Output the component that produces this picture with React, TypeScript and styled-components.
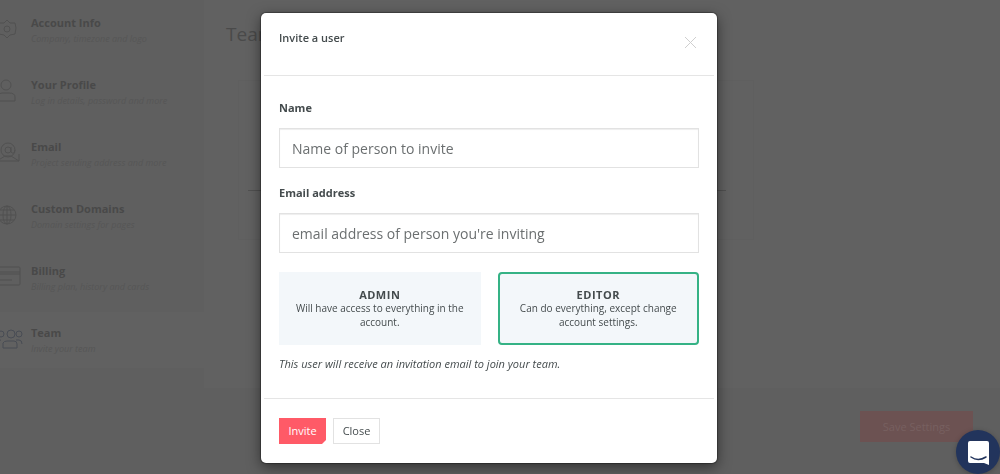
import React from "react";
import styled, { createGlobalStyle } from "styled-components";

const GlobalStyle = createGlobalStyle`
  *, *::before, *::after { box-sizing: border-box; }
  body {
    margin: 0;
    background: #5f5f5f;
    color: #444b4d;
    font-family: "Open Sans", "Noto Sans", sans-serif;
    font-size: 11px;
    line-height: 16px;
  }
  button, input { font: inherit; color: inherit; margin: 0; }
`;

const Page = styled.div`
  display: flex;
  min-height: 100vh;
  overflow: hidden;
`;

const Sidebar = styled.nav`
  flex: 0 0 204px;
  display: flex;
  flex-direction: column;
  gap: 6px;
  padding-top: 2px;
`;

const NavItem = styled.a<{ $active?: boolean }>`
  display: flex;
  align-items: flex-start;
  gap: 7px;
  height: 56px;
  padding-top: 13px;
  color: #494949;
  text-decoration: none;
  background: ${(p) => (p.$active ? "#616161" : "transparent")};
`;

const NavIcon = styled.svg<{ $active?: boolean }>`
  flex: none;
  width: 24px;
  height: 28px;
  fill: none;
  stroke: ${(p) => (p.$active ? "#484c54" : "#515151")};
  stroke-width: 1;
`;

const NavText = styled.span`
  display: flex;
  flex-direction: column;
`;

const NavTitle = styled.strong`
  font-weight: 700;
`;

const NavHint = styled.em`
  font-size: 9px;
  color: #565656;
`;

const Content = styled.div`
  flex: 1;
  display: flex;
  flex-direction: column;
`;

const Panel = styled.main`
  background: #616161;
  padding: 20px 22px 148px;
`;

const PanelTitle = styled.h1`
  margin: 0;
  font-size: 19px;
  line-height: 28px;
  font-weight: 400;
  color: #4a4a4a;
`;

const Card = styled.section`
  max-width: 516px;
  height: 160px;
  margin: 32px 0 0 12px;
  padding: 109px 27px 0 9px;
  border: 1px solid #5f5f5f;
`;

const CardRule = styled.hr`
  margin: 0;
  border: 0;
  border-top: 1px solid #505050;
`;

const PageActions = styled.div`
  display: flex;
  justify-content: flex-end;
  padding: 23px 27px 32px;
`;

const SaveButton = styled.button`
  width: 113px;
  height: 31px;
  padding: 0;
  border: 0;
  background: #6c5252;
  color: #776060;
`;

const Backdrop = styled.div`
  position: fixed;
  inset: 0;
  overflow: auto;
  padding: 13px 22px 11px 0;
`;

const Dialog = styled.div`
  max-width: 456px;
  margin: 0 auto;
  padding: 0 3px;
  background: #fff;
  border-radius: 5px;
  box-shadow: 0 0 1px 1px rgba(0, 0, 0, 0.3), 0 4px 14px rgba(0, 0, 0, 0.5);
`;

const DialogHeader = styled.header`
  display: flex;
  justify-content: space-between;
  height: 63px;
  padding: 17px 15px 0;
  border-bottom: 1px solid #e5e5e5;
`;

const DialogTitle = styled.h2`
  margin: 0;
  font-size: 11px;
  line-height: 16px;
  font-weight: 600;
`;

const DismissButton = styled.button`
  width: 18px;
  height: 24px;
  padding: 0;
  border: 0;
  background: none;
  color: #cfcfcf;
`;

const DialogBody = styled.div`
  padding: 24px 15px 26px;
`;

const Field = styled.div`
  display: flex;
  flex-direction: column;
  gap: 12px;
  margin-bottom: 17px;
`;

const FieldLabel = styled.label`
  font-weight: 700;
`;

const TextInput = styled.input`
  width: 100%;
  height: 40px;
  padding: 0 12px;
  border: 1px solid #e2e2e2;
  border-radius: 0;
  background: #fff;
  box-shadow: inset 0 1px 1px rgba(0, 0, 0, 0.07);
  font-size: 14px;
  &::placeholder { color: #6b6f70; opacity: 1; }
`;

const Roles = styled.div`
  display: grid;
  grid-template-columns: 1fr 1fr;
  gap: 17px;
  margin: 19px 0 11px;
`;

const RoleInput = styled.input`
  appearance: none;
  position: absolute;
  width: 1px;
  height: 1px;
  opacity: 0;
`;

const RoleCard = styled.label`
  display: flex;
  flex-direction: column;
  align-items: center;
  padding: 14px 12px;
  border: 2px solid transparent;
  background: #f3f7fa;
  background-clip: border-box;
  text-align: center;
  cursor: pointer;
  &:has(input:checked) {
    border-color: #35b285;
    border-radius: 4px;
  }
`;

const RoleName = styled.strong`
  line-height: 13px;
  letter-spacing: 0.5px;
`;

const RoleText = styled.span`
  font-size: 10px;
  line-height: 14px;
`;

const Note = styled.p`
  margin: 0;
  font-style: italic;
`;

const DialogFooter = styled.footer`
  display: flex;
  gap: 7px;
  padding: 19px 15px;
  border-top: 1px solid #e5e5e5;
`;

const ActionButton = styled.button<{ $primary?: boolean }>`
  width: 47px;
  height: 26px;
  padding: 0;
  border: 1px solid ${(p) => (p.$primary ? "#ff5a67" : "#e2e2e2")};
  background: ${(p) => (p.$primary ? "#ff5a67" : "#fff")};
  color: ${(p) => (p.$primary ? "#fff" : "inherit")};
  clip-path: ${(p) =>
    p.$primary
      ? "polygon(0 0, 100% 0, 100% calc(100% - 4px), calc(100% - 4px) 100%, 0 100%)"
      : "none"};
`;

const ChatButton = styled.button`
  position: fixed;
  right: 0;
  bottom: 0;
  width: 44px;
  height: 44px;
  padding: 0;
  border: 0;
  border-radius: 50%;
  background: #22345c;
  box-shadow: 0 1px 5px rgba(0, 0, 0, 0.25);
`;

const items = [
  {
    title: "Account Info",
    hint: "Company, timezone and logo",
    icon: (
      <>
        <path d="M7 5l3 3 5 0 1 5 -1 6 -5 1 -3 3 -3-3 -5-1 -1-6 1-5 5 0z" />
        <circle cx="7" cy="14" r="3" />
      </>
    ),
  },
  {
    title: "Your Profile",
    hint: "Log in details, password and more",
    icon: (
      <>
        <circle cx="6" cy="8" r="5" />
        <path d="M-4 24v-4q1-4 6-4h7q6 0 6 4v4z" />
      </>
    ),
  },
  {
    title: "Email",
    hint: "Project sending address and more",
    icon: (
      <>
        <circle cx="8" cy="11" r="7" />
        <circle cx="8" cy="11" r="3" />
        <path d="M11 8v5q3 3 4-2M-3 12v10h22v-7M-3 22l8-5h6l8 5" />
      </>
    ),
  },
  {
    title: "Custom Domains",
    hint: "Domain settings for pages",
    icon: (
      <>
        <circle cx="7" cy="14" r="9" />
        <ellipse cx="7" cy="14" rx="4" ry="9" />
        <path d="M-2 14h18M0 9h14M0 19h14M7 5v18" />
      </>
    ),
  },
  {
    title: "Billing",
    hint: "Billing plan, history and cards",
    icon: (
      <>
        <rect x="-6" y="4" width="26" height="18" rx="1" />
        <path d="M-6 9h26M-6 11h26M0 17h12" />
      </>
    ),
  },
  {
    title: "Team",
    hint: "Invite your team",
    icon: (
      <>
        <circle cx="11" cy="9" r="4" />
        <circle cx="1" cy="9" r="3" />
        <circle cx="19" cy="9" r="3" />
        <path d="M3 23v-5q1-2 4-2h7q3 0 3 3v4zM-3 18q0-3 4-3M16 15h3q3 0 3 4" />
      </>
    ),
  },
];

export default function App() {
  return (
    <>
      <GlobalStyle />
      <Page>
        <Sidebar aria-label="Settings">
          {items.map((item) => {
            const active = item.title === "Team";
            return (
              <NavItem key={item.title} href="#" $active={active}>
                <NavIcon viewBox="0 0 24 28" $active={active} aria-hidden="true">
                  {item.icon}
                </NavIcon>
                <NavText>
                  <NavTitle>{item.title}</NavTitle>
                  <NavHint>{item.hint}</NavHint>
                </NavText>
              </NavItem>
            );
          })}
        </Sidebar>
        <Content>
          <Panel>
            <PanelTitle>Team</PanelTitle>
            <Card>
              <CardRule />
            </Card>
          </Panel>
          <PageActions>
            <SaveButton type="button">Save Settings</SaveButton>
          </PageActions>
        </Content>
      </Page>

      <Backdrop>
        <Dialog role="dialog" aria-modal="true" aria-labelledby="invite-title">
          <DialogHeader>
            <DialogTitle id="invite-title">Invite a user</DialogTitle>
            <DismissButton type="button" aria-label="Dismiss">
              <svg width="18" height="24" viewBox="0 0 18 24" fill="none" stroke="currentColor">
                <path d="M4 7l11 11M15 7L4 18" />
              </svg>
            </DismissButton>
          </DialogHeader>
          <DialogBody>
            <Field>
              <FieldLabel htmlFor="invite-name">Name</FieldLabel>
              <TextInput id="invite-name" type="text" placeholder="Name of person to invite" />
            </Field>
            <Field>
              <FieldLabel htmlFor="invite-email">Email address</FieldLabel>
              <TextInput
                id="invite-email"
                type="email"
                placeholder="email address of person you're inviting"
              />
            </Field>
            <Roles role="radiogroup" aria-label="Role">
              <RoleCard>
                <RoleInput type="radio" name="role" value="admin" />
                <RoleName>ADMIN</RoleName>
                <RoleText>Will have access to everything in the account.</RoleText>
              </RoleCard>
              <RoleCard>
                <RoleInput type="radio" name="role" value="editor" defaultChecked />
                <RoleName>EDITOR</RoleName>
                <RoleText>Can do everything, except change account settings.</RoleText>
              </RoleCard>
            </Roles>
            <Note>This user will receive an invitation email to join your team.</Note>
          </DialogBody>
          <DialogFooter>
            <ActionButton type="button" $primary>
              Invite
            </ActionButton>
            <ActionButton type="button">Close</ActionButton>
          </DialogFooter>
        </Dialog>
      </Backdrop>

      <ChatButton type="button" aria-label="Open chat">
        <svg width="44" height="44" viewBox="0 0 44 44" aria-hidden="true">
          <path
            d="M14 11h17q2 0 2 2v22l-5-2H14q-2 0-2-2V13q0-2 2-2z"
            fill="#fff"
          />
          <path d="M15 27q7 5 15 0" fill="none" stroke="#22345c" strokeWidth="1.5" strokeLinecap="round" />
        </svg>
      </ChatButton>
    </>
  );
}
